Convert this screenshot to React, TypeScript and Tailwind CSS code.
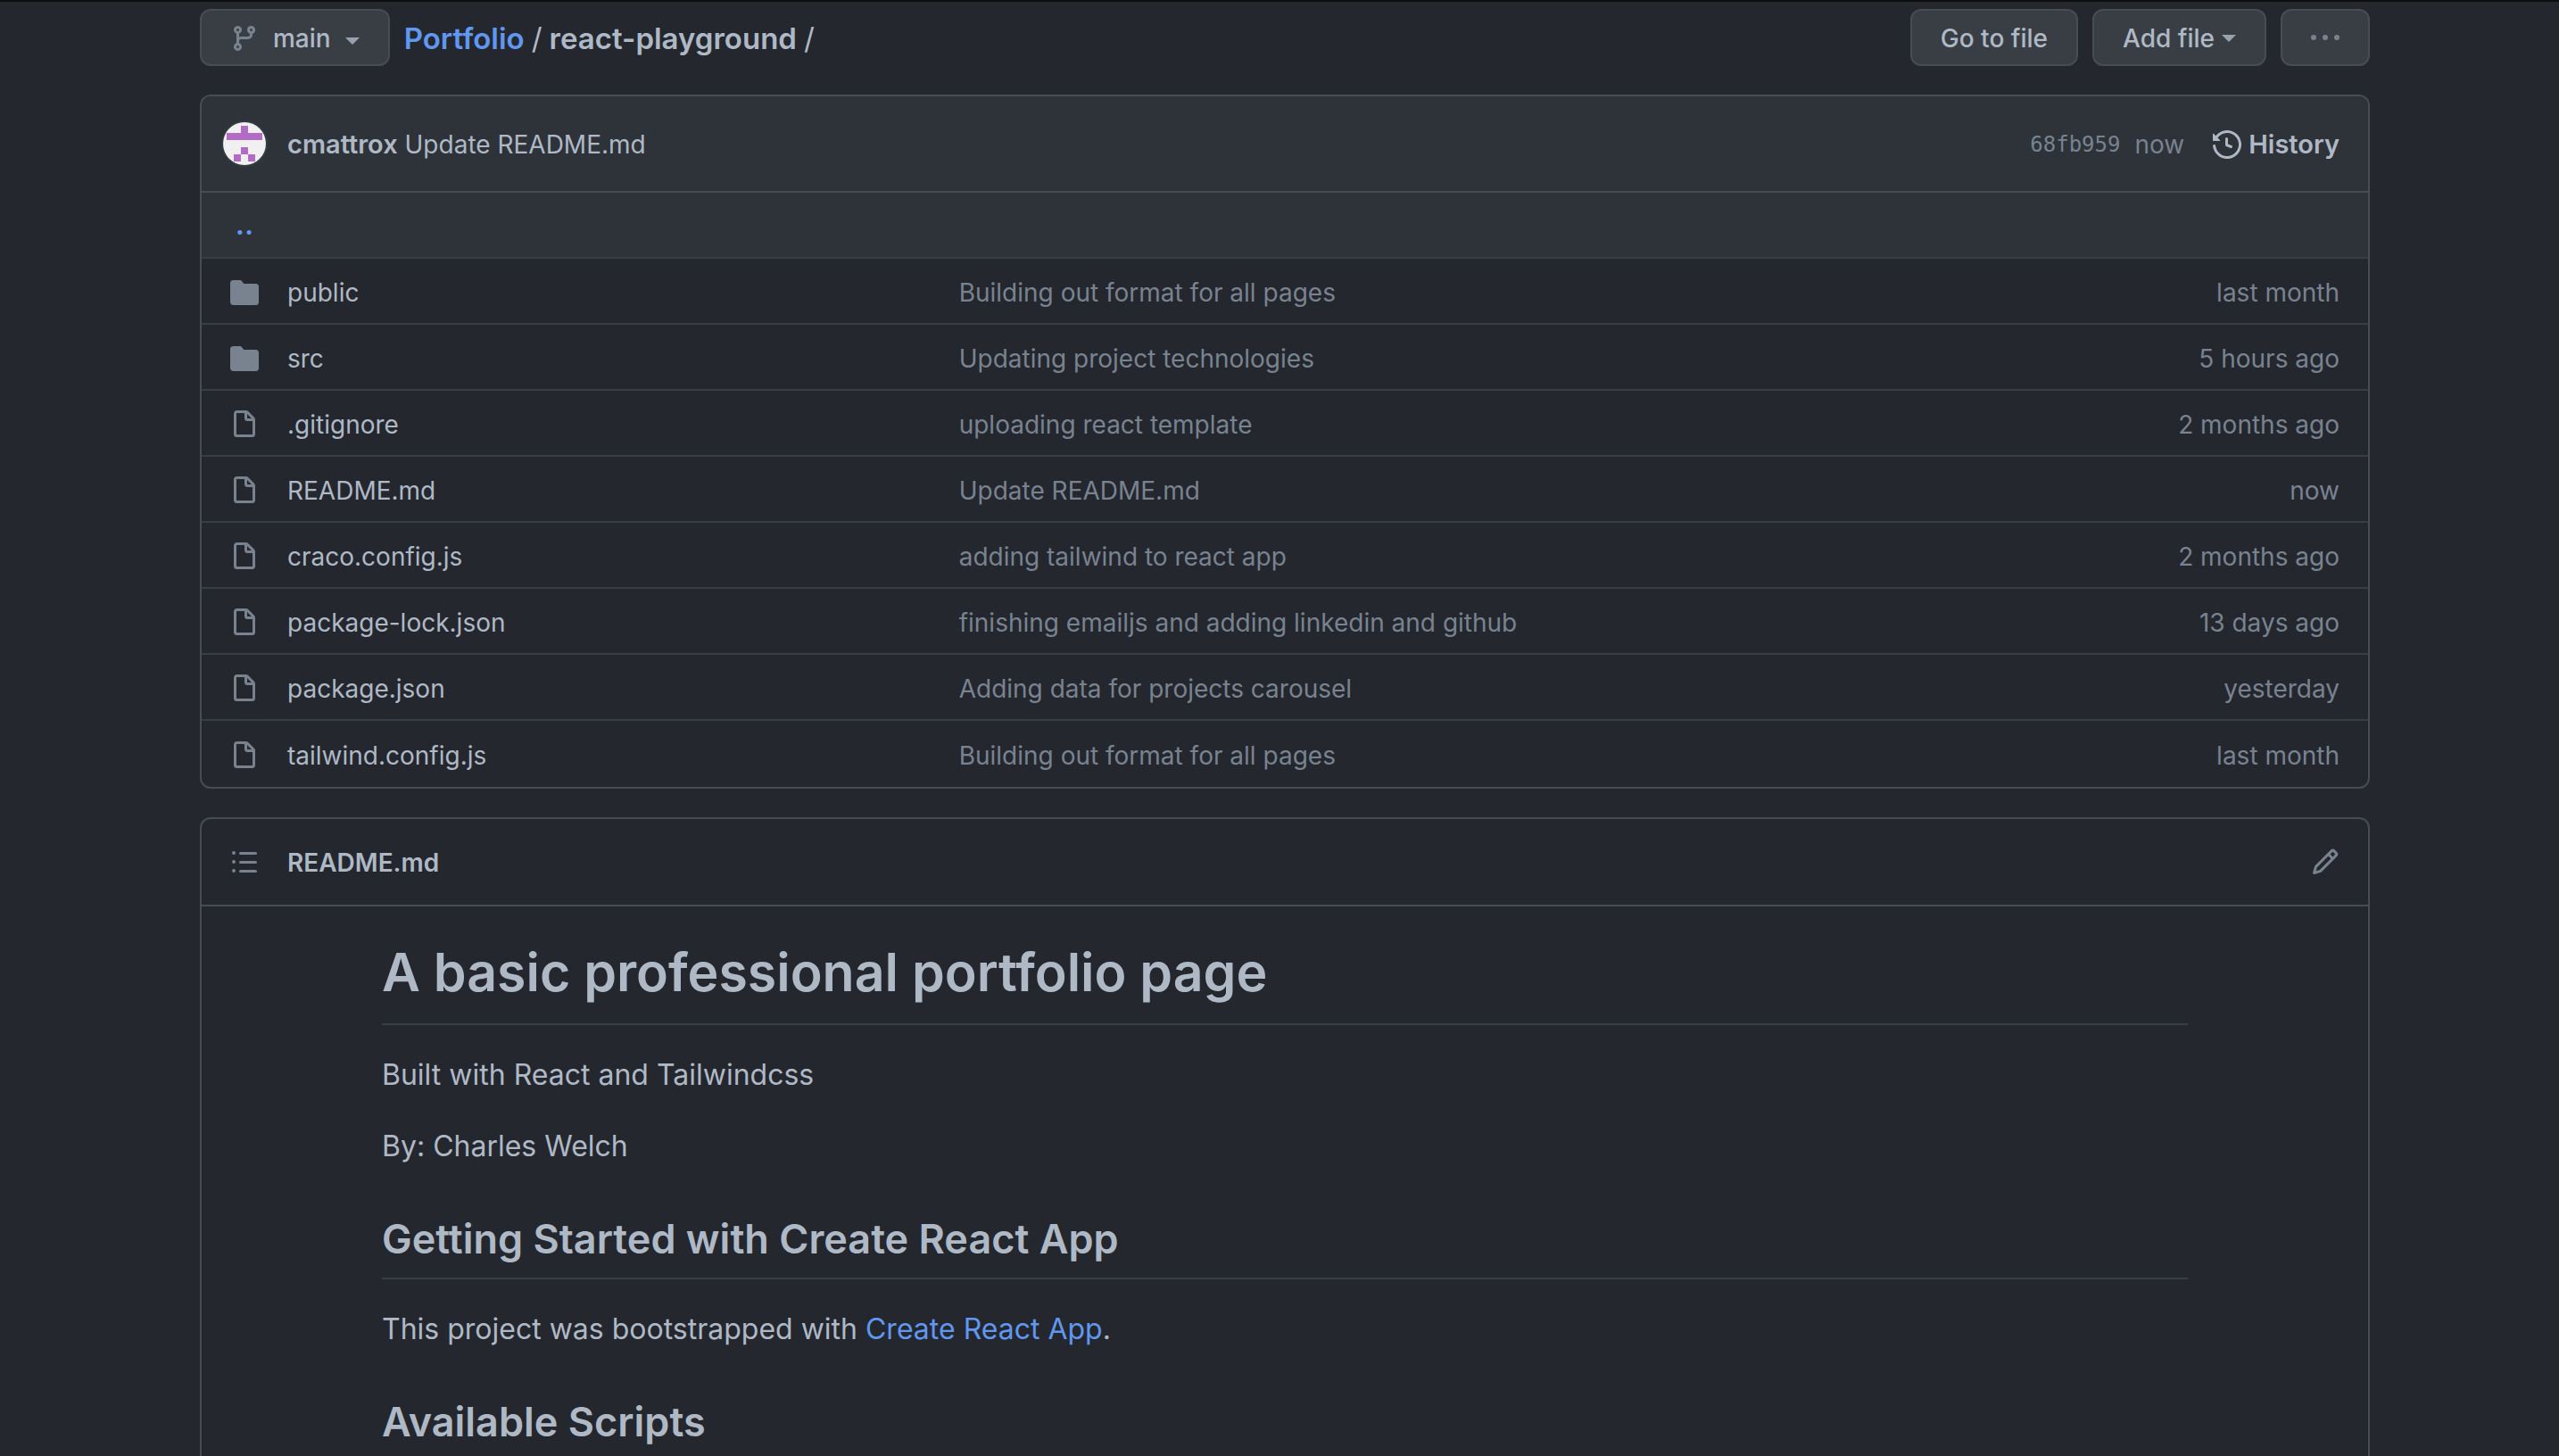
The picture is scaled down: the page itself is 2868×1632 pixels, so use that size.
import type { ReactNode } from "react";

const ICONS = {
  branch:
    "M11.75 2.5a.75.75 0 100 1.5.75.75 0 000-1.5zm-2.25.75a2.25 2.25 0 113 2.122V6A2.5 2.5 0 0110 8.5H6a1 1 0 00-1 1v1.128a2.251 2.251 0 11-1.5 0V5.372a2.25 2.25 0 111.5 0v1.836A2.492 2.492 0 016 7h4a1 1 0 001-1v-.628A2.25 2.25 0 019.5 3.25zM4.25 12a.75.75 0 100 1.5.75.75 0 000-1.5zM3.5 3.25a.75.75 0 111.5 0 .75.75 0 01-1.5 0z",
  dots: "M8 9a1.5 1.5 0 100-3 1.5 1.5 0 000 3zM1.5 9a1.5 1.5 0 100-3 1.5 1.5 0 000 3zm13 0a1.5 1.5 0 100-3 1.5 1.5 0 000 3z",
  history:
    "M1.643 3.143L.427 1.927A.25.25 0 000 2.104V5.75c0 .138.112.25.25.25h3.646a.25.25 0 00.177-.427L2.715 4.215a6.5 6.5 0 11-1.18 4.458.75.75 0 10-1.493.154 8.001 8.001 0 101.6-5.684zM7.75 4a.75.75 0 01.75.75v2.992l2.028.812a.75.75 0 01-.557 1.392l-2.5-1A.75.75 0 017 8.25v-3.5A.75.75 0 017.75 4z",
  folder:
    "M1.75 1A1.75 1.75 0 000 2.75v10.5C0 14.216.784 15 1.75 15h12.5A1.75 1.75 0 0016 13.25v-8.5A1.75 1.75 0 0014.25 3h-6.5a.25.25 0 01-.2-.1l-.9-1.2c-.33-.44-.85-.7-1.4-.7h-3.5z",
  file: "M3.75 1.5a.25.25 0 00-.25.25v11.5c0 .138.112.25.25.25h8.5a.25.25 0 00.25-.25V6H9.75A1.75 1.75 0 018 4.25V1.5H3.75zm5.75.56v2.19c0 .138.112.25.25.25h2.19L9.5 2.06zM2 1.75C2 .784 2.784 0 3.75 0h5.086c.464 0 .909.184 1.237.513l3.414 3.414c.329.328.513.773.513 1.237v8.086A1.75 1.75 0 0112.25 15h-8.5A1.75 1.75 0 012 13.25V1.75z",
  list: "M2 4a1 1 0 100-2 1 1 0 000 2zm3.75-1.5a.75.75 0 000 1.5h8.5a.75.75 0 000-1.5h-8.5zm0 5a.75.75 0 000 1.5h8.5a.75.75 0 000-1.5h-8.5zm0 5a.75.75 0 000 1.5h8.5a.75.75 0 000-1.5h-8.5zM3 8a1 1 0 11-2 0 1 1 0 012 0zm-1 6a1 1 0 100-2 1 1 0 000 2z",
  pencil:
    "M11.013 1.427a1.75 1.75 0 012.474 0l1.086 1.086a1.75 1.75 0 010 2.474l-8.61 8.61c-.21.21-.47.364-.756.445l-3.251.93a.75.75 0 01-.927-.928l.929-3.25a1.75 1.75 0 01.445-.758l8.61-8.61zm1.414 1.06a.25.25 0 00-.354 0L10.811 3.75l1.439 1.44 1.263-1.263a.25.25 0 000-.354l-1.086-1.086zM11.189 6.25L9.75 4.81l-6.286 6.287a.25.25 0 00-.064.108l-.558 1.953 1.953-.558a.249.249 0 00.108-.064l6.286-6.286z",
};

function Icon({ name }: { name: keyof typeof ICONS }) {
  return (
    <svg viewBox="0 0 16 16" className="size-8 shrink-0" fill="currentColor" fillRule="evenodd" aria-hidden="true">
      <path d={ICONS[name]} />
    </svg>
  );
}

function Caret() {
  return (
    <svg viewBox="0 0 16 8" className="h-2 w-4 shrink-0 text-[#98a2ae]" fill="currentColor" aria-hidden="true">
      <path d="M0 0h16L8 8z" />
    </svg>
  );
}

function Button({ children, label }: { children: ReactNode; label?: string }) {
  return (
    <button
      type="button"
      aria-label={label}
      className="flex h-16 cursor-pointer items-center rounded-xl border-2 border-[#474c55] bg-[#393e45] px-8 pt-0.5 text-[28px] font-medium"
    >
      {children}
    </button>
  );
}

function Avatar() {
  return (
    <svg
      viewBox="0 0 48 48"
      className="size-12 rounded-full bg-[#f0f0f0] ring-2 ring-[#353b42]"
      fill="#b36bc6"
      role="img"
      aria-label="@cmattrox"
    >
      <path d="M20 4h8v8h16v8H4v-8h16zM20 28h8v8h8v8h-8v-8h-8v8h-8v-8h8z" />
    </svg>
  );
}

type Entry = { icon: "folder" | "file"; name: string; message: string; age: string };

const ENTRIES: Entry[] = [
  { icon: "folder", name: "public", message: "Building out format for all pages", age: "last month" },
  { icon: "folder", name: "src", message: "Updating project technologies", age: "5 hours ago" },
  { icon: "file", name: ".gitignore", message: "uploading react template", age: "2 months ago" },
  { icon: "file", name: "README.md", message: "Update README.md", age: "now" },
  { icon: "file", name: "craco.config.js", message: "adding tailwind to react app", age: "2 months ago" },
  { icon: "file", name: "package-lock.json", message: "finishing emailjs and adding linkedin and github", age: "13 days ago" },
  { icon: "file", name: "package.json", message: "Adding data for projects carousel", age: "yesterday" },
  { icon: "file", name: "tailwind.config.js", message: "Building out format for all pages", age: "last month" },
];

function Toolbar() {
  return (
    <div className="flex items-center justify-between">
      <div className="flex items-center gap-4">
        <Button>
          <span className="flex items-center gap-4">
            <span className="text-[#798390]">
              <Icon name="branch" />
            </span>
            main
            <span className="pt-1.5">
              <Caret />
            </span>
          </span>
        </Button>
        <nav aria-label="Breadcrumb" className="flex gap-2 pt-0.5 text-[33px] font-semibold">
          <a href="#portfolio" className="text-[#6198ef]">
            Portfolio
          </a>
          <span className="font-normal">/</span>
          <span>react-playground</span>
          <span className="font-normal">/</span>
        </nav>
      </div>
      <div className="flex gap-4">
        <Button>Go to file</Button>
        <Button>
          <span className="flex items-center gap-2">
            Add file
            <Caret />
          </span>
        </Button>
        <Button label="More options">
          <span className="text-[#798390]">
            <Icon name="dots" />
          </span>
        </Button>
      </div>
    </div>
  );
}

function FileBrowser() {
  return (
    <section className="mt-8 overflow-hidden rounded-xl border-2 border-[#474c55]">
      <div className="flex h-[108px] items-center border-b-2 border-[#474c55] bg-[#2e3239] pr-8 pl-6">
        <Avatar />
        <p className="ml-6 pt-0.5">
          <a href="#cmattrox" className="text-[29px] font-semibold">
            cmattrox
          </a>{" "}
          <a href="#commit">Update README.md</a>
        </p>
        <div className="ml-auto flex items-center pt-0.5 text-[#798390]">
          <a href="#68fb959" className="font-['DejaVu_Sans_Mono',monospace] text-[24px]">
            68fb959
          </a>
          <span className="ml-4">now</span>
          <a href="#history" className="ml-8 flex items-center gap-2 text-[29px] font-semibold text-[#afb9c6]">
            <Icon name="history" />
            History
          </a>
        </div>
      </div>
      <table className="w-full table-fixed border-separate border-spacing-0 text-left">
        <colgroup>
          <col className="w-24" />
          <col className="w-[31%]" />
          <col />
          <col className="w-[20%]" />
        </colgroup>
        <tbody>
          <tr className="h-18 bg-[#2e3239]">
            <td className="p-0 text-center text-[32px] font-semibold text-[#6198ef]">
              <a href="#parent" aria-label="Parent directory">
                ..
              </a>
            </td>
            <td colSpan={3} />
          </tr>
          {ENTRIES.map((entry) => (
            <tr key={entry.name} className="h-[74px] last:h-[76px]">
              <td className="border-t-2 border-[#393e45] p-0 pt-1 pl-8 text-[#798390]">
                <Icon name={entry.icon} />
              </td>
              <td className="border-t-2 border-[#393e45] p-0 pt-1">
                <a href={"#" + entry.name}>{entry.name}</a>
              </td>
              <td className="border-t-2 border-[#393e45] p-0 pt-1 text-[#798390]">{entry.message}</td>
              <td className="border-t-2 border-[#393e45] p-0 pt-1 pr-8 text-right text-[#798390]">{entry.age}</td>
            </tr>
          ))}
        </tbody>
      </table>
    </section>
  );
}

function Readme() {
  return (
    <section className="mt-8 rounded-t-xl border-2 border-b-0 border-[#474c55]">
      <div className="flex h-[98px] items-center gap-8 border-b-2 border-[#474c55] px-8 text-[#798390]">
        <button type="button" aria-label="Table of contents" className="cursor-pointer">
          <Icon name="list" />
        </button>
        <h2 className="pt-0.5 font-semibold text-[#afb9c6]">
          <a href="#readme">README.md</a>
        </h2>
        <button type="button" aria-label="Edit this file" className="ml-auto cursor-pointer">
          <Icon name="pencil" />
        </button>
      </div>
      <article className="mx-auto max-w-[2024px] py-8 text-[32px] leading-12">
        <h1 className="mb-8 border-b-2 border-[#393e45] pt-0.5 pb-[17px] text-[59px] leading-20 font-semibold">
          A basic professional portfolio page
        </h1>
        <p className="mb-8">Built with React and Tailwindcss</p>
        <p>By: Charles Welch</p>
        <h2 className="mt-12 mb-8 border-b-2 border-[#393e45] pt-0.5 pb-[13px] text-[45px] leading-15 font-semibold">
          Getting Started with Create React App
        </h2>
        <p>
          This project was bootstrapped with{" "}
          <a href="#create-react-app" className="text-[#6198ef]">
            Create React App
          </a>
          .
        </p>
        <h2 className="mt-12 pt-0.5 text-[45px] leading-15 font-semibold">Available Scripts</h2>
      </article>
    </section>
  );
}

export default function App() {
  return (
    <div className="h-screen overflow-hidden border-t-2 border-[#0d0e10] bg-[#24272e] font-[Inter,sans-serif] text-[28px] leading-[42px] text-[#afb9c6]">
      <main className="mx-auto max-w-[2496px] pt-2 pr-[26px] pl-[38px]">
        <Toolbar />
        <FileBrowser />
        <Readme />
      </main>
    </div>
  );
}
